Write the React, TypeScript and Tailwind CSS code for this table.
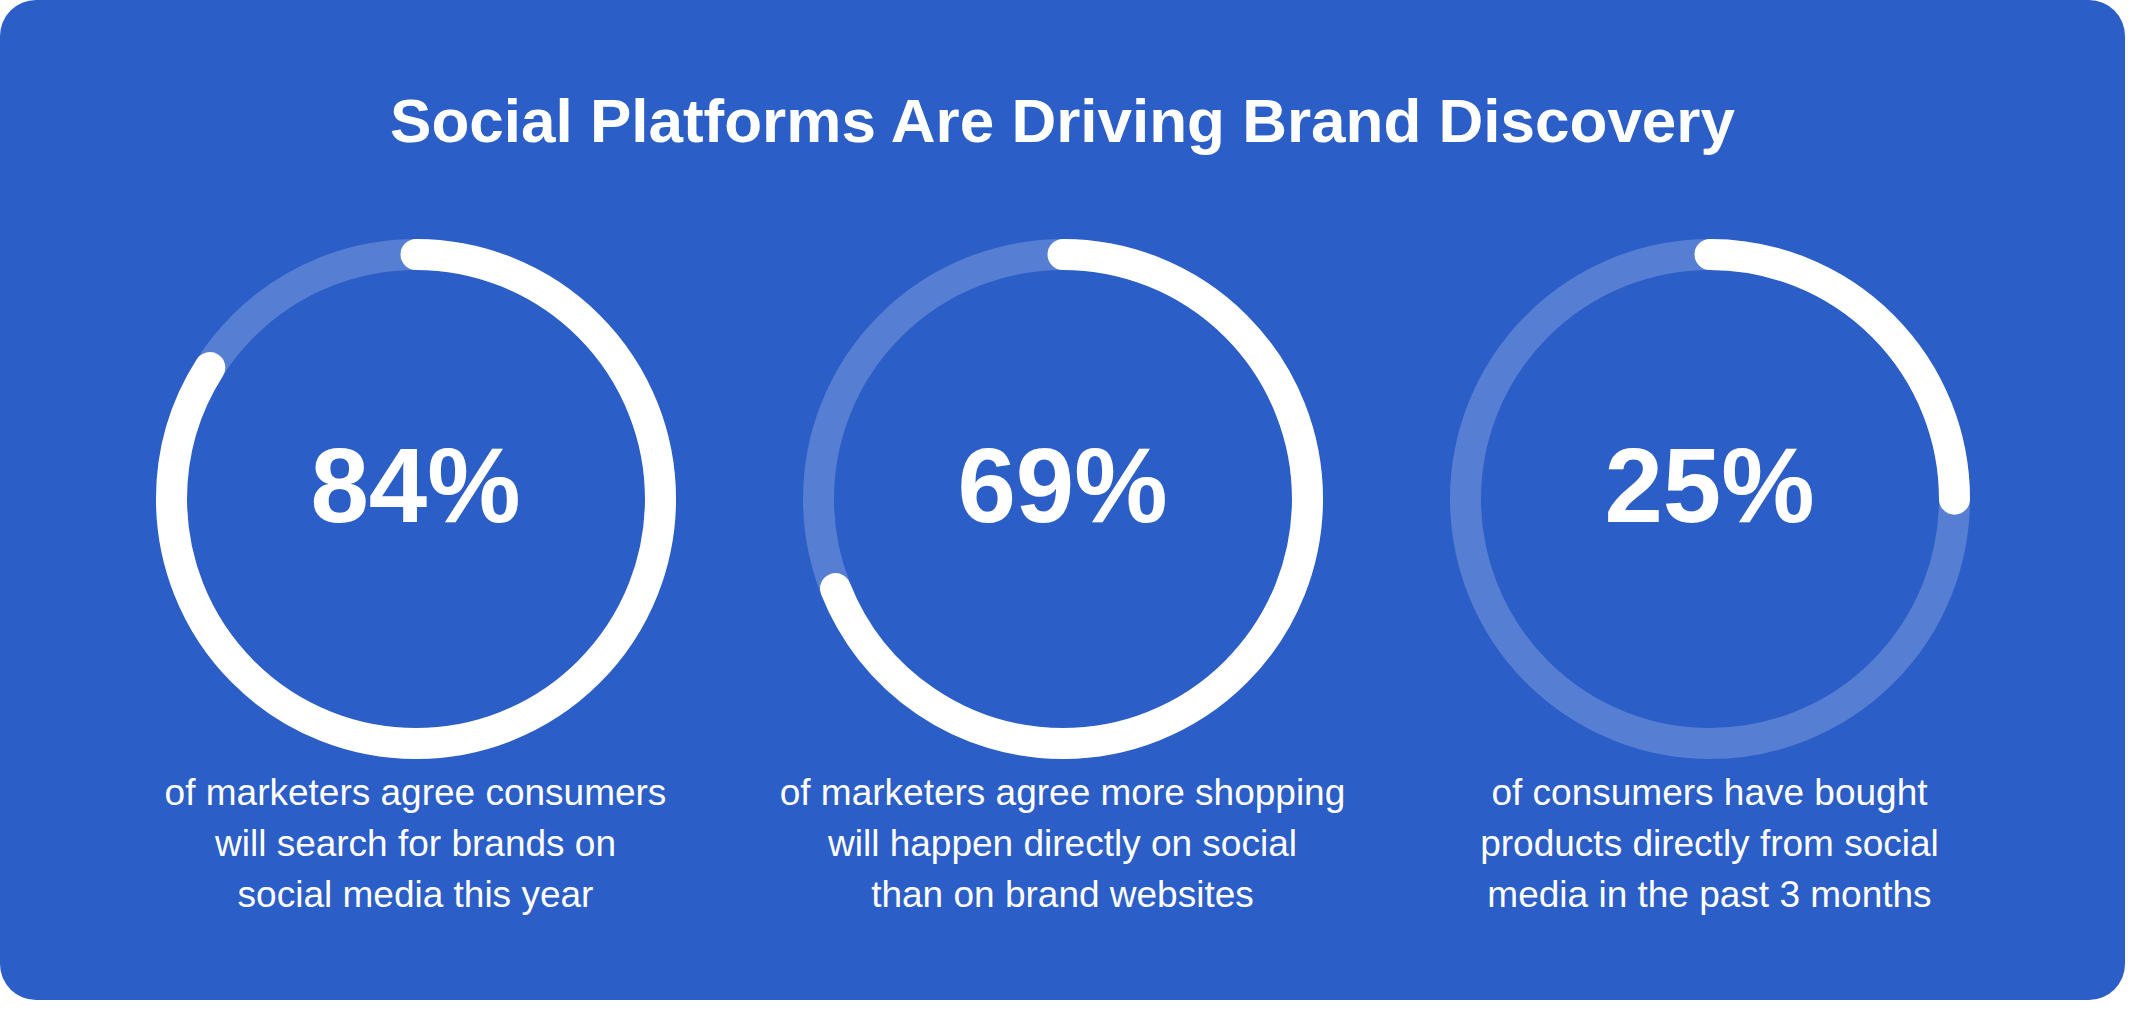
import React from 'react';

interface Stat {
  value: number;
  lines: string[];
}

const stats: Stat[] = [
  { value: 84, lines: ['of marketers agree consumers', 'will search for brands on', 'social media this year'] },
  { value: 69, lines: ['of marketers agree more shopping', 'will happen directly on social', 'than on brand websites'] },
  { value: 25, lines: ['of consumers have bought', 'products directly from social', 'media in the past 3 months'] },
];

const SIZE = 520;
const STROKE = 31;
const R = (SIZE - STROKE) / 2;
const C = 2 * Math.PI * R;

const Ring: React.FC<{ value: number }> = ({ value }) => (
  <div className="relative w-[520px] h-[520px]">
    <svg width={SIZE} height={SIZE} viewBox={`0 0 ${SIZE} ${SIZE}`} className="block">
      <circle cx={SIZE / 2} cy={SIZE / 2} r={R} fill="none" stroke="#567ed3" strokeWidth={STROKE} />
      <circle
        cx={SIZE / 2}
        cy={SIZE / 2}
        r={R}
        fill="none"
        stroke="#ffffff"
        strokeWidth={STROKE}
        strokeLinecap="round"
        strokeDasharray={`${(C * value) / 100} ${C}`}
        transform={`rotate(-90 ${SIZE / 2} ${SIZE / 2})`}
      />
    </svg>
    <div className="absolute inset-0 flex items-center justify-center pb-[28px]">
      <span className="text-[105px] leading-none font-bold text-white">{value}%</span>
    </div>
  </div>
);

export default function App() {
  return (
    <div className="w-[2156px] h-[1031px] bg-white font-['Liberation_Sans',Arial,sans-serif]">
      <div className="w-[2125px] h-[1000px] rounded-[36px] bg-[#2c5ec8] flex flex-col items-center">
        <h1 className="pt-[90px] text-[62px] leading-none font-bold text-white">
          Social Platforms Are Driving Brand Discovery
        </h1>
        <div className="mt-[87px] w-full px-[92px] grid grid-cols-3">
          {stats.map(s => (
            <div key={s.value} className="flex flex-col items-center">
              <Ring value={s.value} />
              <p className="mt-[8px] text-[37px] leading-[51px] text-white text-center">
                {s.lines.map((l, i) => (
                  <React.Fragment key={i}>
                    {l}
                    {i < s.lines.length - 1 && <br />}
                  </React.Fragment>
                ))}
              </p>
            </div>
          ))}
        </div>
      </div>
    </div>
  );
}
